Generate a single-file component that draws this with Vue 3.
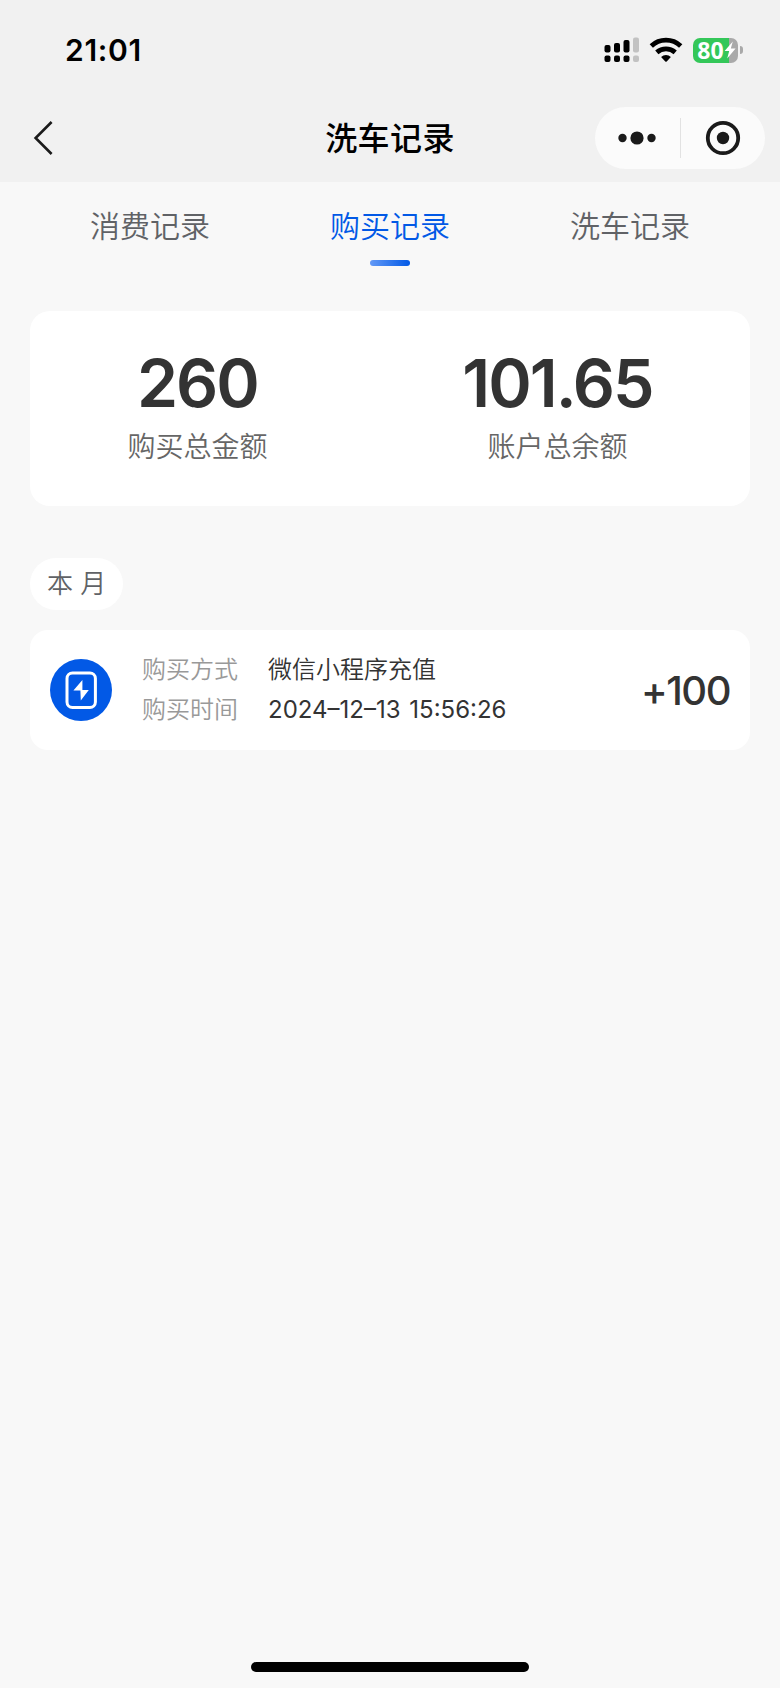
<script setup>
import { ref } from 'vue'

const tabs = ['消费记录', '购买记录', '洗车记录']
const active = ref(1)

const totals = [
  { value: '260', label: '购买总金额' },
  { value: '101.65', label: '账户总余额' },
]

const groups = [
  {
    month: '本 月',
    records: [{ way: '微信小程序充值', time: '2024–12–13 15:56:26', amount: '+100' }],
  },
]
</script>

<template>
  <div class="page">
    <header class="header">
      <div class="status">
        <span class="status__time">21:01</span>
        <div class="status__icons">
          <svg class="signal" width="36" height="26" viewBox="0 0 36 26" aria-hidden="true">
            <rect x="0.5" y="8" width="6" height="7.5" rx="2" />
            <rect x="10" y="6" width="6" height="9.5" rx="2" />
            <rect x="19.5" y="3" width="6" height="12.5" rx="2" />
            <rect x="29" y="0.5" width="6" height="15" rx="2" fill="#c2c2c2" />
            <rect x="0.5" y="18.5" width="6" height="6.5" rx="2" />
            <rect x="10" y="18.5" width="6" height="6.5" rx="2" />
            <rect x="19.5" y="18.5" width="6" height="6.5" rx="2" />
            <rect x="29" y="18.5" width="6" height="6.5" rx="2" fill="#c2c2c2" />
          </svg>
          <svg class="wifi" width="34" height="26" viewBox="0 0 34 26" aria-hidden="true">
            <g fill="none" stroke="#000" stroke-width="4.8">
              <path d="M2.3 9 A21.5 21.5 0 0 1 31.7 9" />
              <path d="M7.8 15.4 A13.8 13.8 0 0 1 26.2 15.4" />
            </g>
            <path d="M12.1 20 A7.2 7.2 0 0 1 21.9 20 L17.7 24.4 Q17 25 16.3 24.4 Z" />
          </svg>
          <div class="battery">
            <div class="battery__body">
              <span class="battery__num">80</span>
              <svg width="12" height="18" viewBox="0 0 12 18" aria-hidden="true">
                <path d="M8.8 0.5 L0.6 10 H5.2 L3.2 17.5 L11.6 7.6 H6.8 Z" fill="#fff" />
              </svg>
            </div>
            <span class="battery__cap"></span>
          </div>
        </div>
      </div>

      <nav class="nav">
        <svg class="nav__back" width="20" height="36" viewBox="0 0 20 36" aria-hidden="true">
          <path d="M18.6 2 L2.6 18 L18.6 34" fill="none" stroke="#1a1a1a" stroke-width="2.6" />
        </svg>
        <h1 class="nav__title">洗车记录</h1>
        <div class="capsule">
          <svg width="38" height="14" viewBox="0 0 38 14" aria-hidden="true">
            <circle cx="4.5" cy="7" r="4.2" />
            <circle cx="19" cy="7" r="6.6" />
            <circle cx="33.5" cy="7" r="4.2" />
          </svg>
          <i class="capsule__line"></i>
          <svg width="36" height="36" viewBox="0 0 36 36" aria-hidden="true">
            <circle cx="18" cy="18" r="15.2" fill="none" stroke="#1a1a1a" stroke-width="3.8" />
            <circle cx="18" cy="18" r="6.2" />
          </svg>
        </div>
      </nav>
    </header>

    <div class="tabs">
      <div
        v-for="(tab, i) in tabs"
        :key="i"
        class="tab"
        :class="{ 'tab--active': i === active }"
        @click="active = i"
      >
        {{ tab }}
      </div>
    </div>

    <section class="totals">
      <div v-for="item in totals" :key="item.label" class="total">
        <span class="total__value">{{ item.value }}</span>
        <span class="total__label">{{ item.label }}</span>
      </div>
    </section>

    <section v-for="group in groups" :key="group.month" class="group">
      <span class="group__month">{{ group.month }}</span>
      <div v-for="record in group.records" :key="record.time" class="record">
        <svg class="record__icon" width="62" height="62" viewBox="0 0 62 62" aria-hidden="true">
          <circle cx="31" cy="31" r="31" fill="#0259e6" />
          <rect x="17" y="14" width="28.4" height="34.6" rx="5.5" fill="none" stroke="#fff" stroke-width="3" />
          <path d="M32.4 21 L23.4 31.6 H30.4 L30.8 41.4 L38.8 31 H32.4 Z" fill="#fff" />
        </svg>
        <dl class="record__info">
          <dt>购买方式</dt>
          <dd>{{ record.way }}</dd>
          <dt>购买时间</dt>
          <dd class="record__time">{{ record.time }}</dd>
        </dl>
        <span class="record__amount">{{ record.amount }}</span>
      </div>
    </section>

    <div class="home-bar"></div>
  </div>
</template>

<style>
body {
  background: #f8f8f8;
}
</style>

<style scoped>
.page {
  display: flex;
  flex-direction: column;
  box-sizing: border-box;
  width: 780px;
  height: 1688px;
  padding-bottom: 16px;
  background: #f8f8f8;
  color: #333;
  font-family: Inter, 'Noto Sans CJK SC', sans-serif;
}
.header {
  height: 182px;
  background: #f1f1f1;
}
.status {
  display: flex;
  align-items: center;
  justify-content: space-between;
  height: 100px;
  padding: 0 37px 0 65px;
  color: #000;
}
.status__time {
  font-size: 30px;
  font-weight: 600;
  line-height: 36px;
  letter-spacing: 0.7px;
}
.status__icons {
  display: flex;
  align-items: center;
}
.wifi {
  margin: 0 10px 0 9px;
}
.battery {
  display: flex;
  align-items: center;
  gap: 2px;
}
.battery__body {
  display: flex;
  align-items: center;
  justify-content: center;
  box-sizing: border-box;
  width: 45px;
  height: 25px;
  padding-left: 2px;
  border-radius: 7px;
  background: linear-gradient(90deg, #34c759 80%, #a9a9a9 80%);
}
.battery__num {
  color: #fff;
  font-family: 'Open Sans', sans-serif;
  font-size: 23px;
  font-weight: 700;
  line-height: 25px;
}
.battery__cap {
  width: 3px;
  height: 8px;
  border-radius: 0 4px 4px 0;
  background: #a9a9a9;
}
.nav {
  display: grid;
  grid-template-columns: 1fr auto 1fr;
  align-items: center;
  height: 76px;
  padding: 0 15px;
}
.nav__back {
  margin-left: 18px;
}
.nav__title {
  margin: 0;
  padding-top: 2px;
  color: #000;
  font-size: 32px;
  font-weight: 500;
  line-height: 48px;
  letter-spacing: 0.4px;
}
.capsule {
  display: flex;
  align-items: center;
  justify-content: space-between;
  justify-self: end;
  box-sizing: border-box;
  width: 170px;
  height: 62px;
  padding: 0 24px 0 23px;
  border-radius: 31px;
  background: #fbfbfb;
  fill: #1a1a1a;
}
.capsule__line {
  width: 1px;
  height: 40px;
  margin-left: -1px;
  background: #e2e2e2;
}
.tabs {
  display: flex;
  padding: 0 30px;
}
.tab {
  display: flex;
  flex: 1;
  flex-direction: column;
  align-items: center;
  height: 84px;
  padding-top: 22px;
  box-sizing: border-box;
  color: #606266;
  font-size: 30px;
  font-weight: 350;
  line-height: 44px;
}
.tab--active {
  color: #0259e6;
}
.tab--active::after {
  content: '';
  width: 40px;
  height: 6px;
  margin-top: 12px;
  border-radius: 3px;
  background: linear-gradient(90deg, #6399f6, #0259e6);
}
.totals {
  display: flex;
  justify-content: space-around;
  box-sizing: border-box;
  height: 195px;
  margin: 45px 30px 0;
  padding-top: 37px;
  border-radius: 20px;
  background: #fff;
}
.total {
  display: flex;
  flex-direction: column;
  align-items: center;
}
.total__value {
  font-size: 66px;
  font-weight: 560;
  line-height: 70px;
  letter-spacing: -2px;
}
.total__label {
  margin-top: 8px;
  color: #666;
  font-size: 28px;
  font-weight: 350;
  line-height: 42px;
}
.group {
  display: flex;
  flex-direction: column;
  align-items: flex-start;
  gap: 20px;
  margin: 52px 30px 0;
}
.group__month {
  padding: 0 17px;
  border-radius: 26px;
  background: #fff;
  color: #606266;
  font-size: 26px;
  font-weight: 350;
  line-height: 52px;
}
.record {
  display: flex;
  align-items: center;
  box-sizing: border-box;
  width: 100%;
  height: 120px;
  padding: 0 20px;
  border-radius: 18px;
  background: #fff;
}
.record__info {
  display: grid;
  grid-template-columns: 126px auto;
  margin: 0 0 0 30px;
  font-size: 24px;
  font-weight: 350;
  line-height: 40px;
}
.record__info dt {
  color: #999;
}
.record__info dd {
  margin: 0;
}
.record__time {
  font-weight: 380;
  word-spacing: 2px;
}
.record__amount {
  margin-left: auto;
  padding-top: 2px;
  font-size: 40px;
  font-weight: 540;
  line-height: 48px;
  letter-spacing: -1.5px;
}
.home-bar {
  width: 278px;
  height: 10px;
  margin: auto auto 0;
  border-radius: 5px;
  background: #000;
}
</style>
